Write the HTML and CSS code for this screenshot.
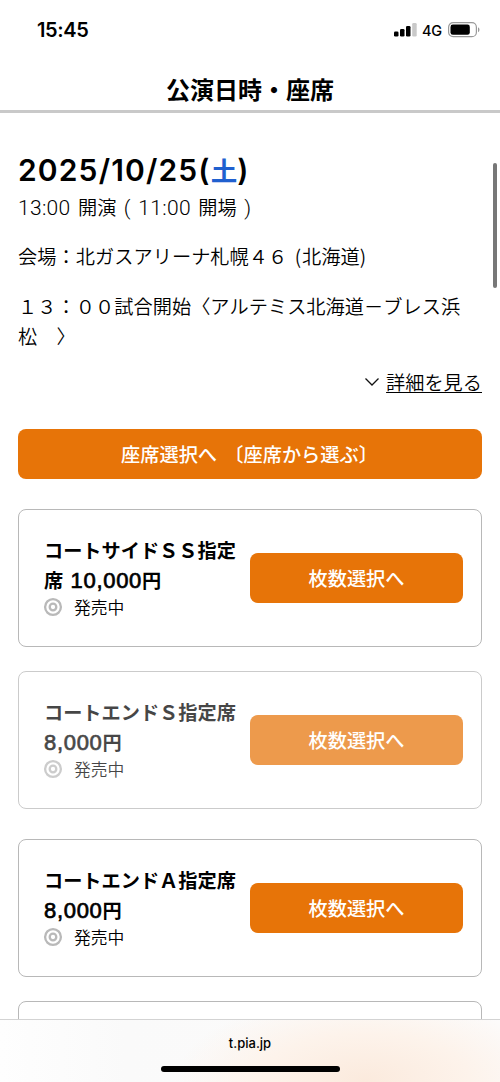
FILE: index.html
```html
<!DOCTYPE html>
<html lang="ja">
<head>
<meta charset="utf-8">
<title>公演日時・座席</title>
<link rel="stylesheet" href="styles.css">
</head>
<body>
<div class="screen">
  <div class="status-bar">
    <span class="clock">15:45</span>
    <div class="indicators">
      <svg class="signal" width="23" height="14" viewBox="0 0 23 14"><rect x="0" y="8.5" width="4.5" height="5" rx="1.3"/><rect x="6" y="6" width="4.5" height="7.5" rx="1.3"/><rect x="12" y="3" width="4.5" height="10.5" rx="1.3"/><rect class="weak" x="18.2" y="0" width="4.5" height="13.5" rx="1.3"/></svg>
      <span class="network">4G</span>
      <svg class="battery" width="32" height="16" viewBox="0 0 32 16"><rect class="shell" x=".6" y=".7" width="27.8" height="14" rx="4.5"/><rect x="2.5" y="2.6" width="19.3" height="10.2" rx="2.3"/><path class="cap" d="M30 5.2c2 1.1 2 4 0 5.1z"/></svg>
    </div>
  </div>
  <header class="page-header"><h1>公演日時・座席</h1></header>
  <main class="content">
    <h2 class="date"><span class="date-num">2025/10/25(</span><span class="saturday">土</span><span class="date-num">)</span></h2>
    <p class="times"><span class="num">13:00</span> 開演 <span class="num">(</span> <span class="num">11:00</span> 開場 <span class="num">)</span></p>
    <p class="venue">会場：北ガスアリーナ札幌４６ <span class="paren">(</span>北海道<span class="paren">)</span></p>
    <p class="match">１３：００試合開始〈アルテミス北海道－ブレス浜<br>松　〉</p>
    <div class="details"><svg width="16" height="10" viewBox="0 0 16 10"><path d="M1.5 1.5 8 8l6.500-6.500"/></svg><a>詳細を見る</a></div>
    <button class="button seat-button">座席選択へ 〔座席から選ぶ〕</button>
    <section class="ticket">
      <div class="info"><h3>コートサイドＳＳ指定<br>席 <span class="price">10,000</span>円</h3>
      <div class="sale"><svg width="20" height="20" viewBox="0 0 20 20"><circle cx="10" cy="10" r="7.900"/><circle cx="10" cy="10" r="3.300"/></svg><span>発売中</span></div></div>
      <button class="button">枚数選択へ</button>
    </section>
    <section class="ticket faded">
      <div class="info"><h3>コートエンドＳ指定席<br><span class="price">8,000</span>円</h3>
      <div class="sale"><svg width="20" height="20" viewBox="0 0 20 20"><circle cx="10" cy="10" r="7.900"/><circle cx="10" cy="10" r="3.300"/></svg><span>発売中</span></div></div>
      <button class="button">枚数選択へ</button>
    </section>
    <section class="ticket next-group">
      <div class="info"><h3>コートエンドＡ指定席<br><span class="price">8,000</span>円</h3>
      <div class="sale"><svg width="20" height="20" viewBox="0 0 20 20"><circle cx="10" cy="10" r="7.900"/><circle cx="10" cy="10" r="3.300"/></svg><span>発売中</span></div></div>
      <button class="button">枚数選択へ</button>
    </section>
    <section class="ticket"></section>
  </main>
  <div class="scroll-thumb"></div>
  <footer class="browser-bar"><span class="address">t.pia.jp</span><div class="home-indicator"></div></footer>
</div>
</body>
</html>
```
FILE: styles.css
```css
* { box-sizing: border-box; }
body { margin: 0; background: #fff; color: #000; font-family: "Noto Sans CJK JP", sans-serif; }
h1, h2, h3, p { margin: 0; white-space: nowrap; }
.screen { position: relative; height: 1082px; overflow: hidden; }
.status-bar { display: flex; justify-content: space-between; height: 66px; padding: 18px 20px 0 37px; font-family: Inter, sans-serif; }
.clock { font-size: 20px; line-height: 24px; font-weight: 600; letter-spacing: -.35px; }
.indicators { display: flex; height: 24px; align-items: center; }
.signal { margin-right: 5px; }
.signal .weak { fill: #c9c9c9; }
.network { width: 26px; font-size: 14.500px; font-weight: 500; letter-spacing: -.2px; }
.battery .shell { fill: none; stroke: #999; stroke-width: 1.200; }
.battery .cap { fill: #999; }
.page-header { height: 47px; border-bottom: 3px solid #c9c9c9; text-align: center; }
.page-header h1 { font-size: 24px; line-height: 45px; font-weight: 700; }
.content { padding: 39px 18px 0; font-size: 19.200px; font-weight: 350; }
.date { height: 36px; font-size: 26.500px; line-height: 36px; font-weight: 700; }
.date-num { font-family: Inter, sans-serif; font-size: 30px; font-weight: 600; line-height: 1; letter-spacing: 1.150px; }
.saturday { color: #2060cf; }
.times { height: 38px; line-height: 38px; word-spacing: 3.200px; }
.num { font-family: Roboto, sans-serif; font-size: 21px; font-weight: 350; line-height: 1; letter-spacing: .3px; }
.venue { margin-top: 12px; line-height: 36px; word-spacing: 3px; letter-spacing: .05px; }
.paren { letter-spacing: 1px; }
.match { margin-top: 17px; line-height: 30px; letter-spacing: .05px; }
.details { display: flex; align-items: center; justify-content: flex-end; gap: 6px; height: 30px; margin-top: 16px; }
.details svg { fill: none; stroke: #111; stroke-width: 1.300; }
.details a { text-decoration: underline; text-decoration-thickness: 1px; text-underline-offset: 2px; text-decoration-skip-ink: none; line-height: 30px; }
.button { flex: none; width: 213px; height: 50px; padding: 0; border: 0; border-radius: 8px; background: #e77408; color: #fff; font: 500 19.200px/50px "Noto Sans CJK JP", sans-serif; }
.seat-button { display: block; width: 464px; margin-top: 32px; margin-bottom: 30px; padding-right: 1px; white-space: nowrap; word-spacing: 3px; }
.ticket { display: flex; align-items: center; justify-content: space-between; height: 138px; margin-bottom: 24px; padding: 0 18px 0 25px; border: 1px solid #b8b8b8; border-radius: 8px; }
.info { padding-bottom: 2px; }
.ticket h3 { font-size: 19.200px; line-height: 30px; font-weight: 600; word-spacing: 3px; }
.price { font-family: "Liberation Sans", sans-serif; font-size: 22px; font-weight: 400; line-height: 1; letter-spacing: .7px; -webkit-text-stroke: .7px currentColor; }
.sale { display: flex; align-items: center; gap: 11px; height: 24px; margin-left: -1px; font-size: 16.800px; }
.sale svg { fill: none; stroke: #b9b9b9; stroke-width: 2.300; }
.faded { opacity: .72; }
.next-group { margin-top: 30px; }
.scroll-thumb { position: absolute; top: 163px; right: 3px; width: 4px; height: 125px; border-radius: 2px; background: #777; }
.browser-bar { position: absolute; right: 0; bottom: 0; left: 0; display: flex; flex-direction: column; align-items: center; height: 63px; padding-top: 15px; border-top: 1px solid #d3d3d3; background: radial-gradient(ellipse 190px 85px at 365px 60px, #fbeadd, #fdf3eb 55%, transparent), linear-gradient(90deg, #fefefe, #fafafa 25%, #fcfbfb); }
.address { height: 31px; font: 500 13px/17px Inter, sans-serif; }
.home-indicator { width: 179px; height: 6px; border-radius: 3px; background: #000; }
```
